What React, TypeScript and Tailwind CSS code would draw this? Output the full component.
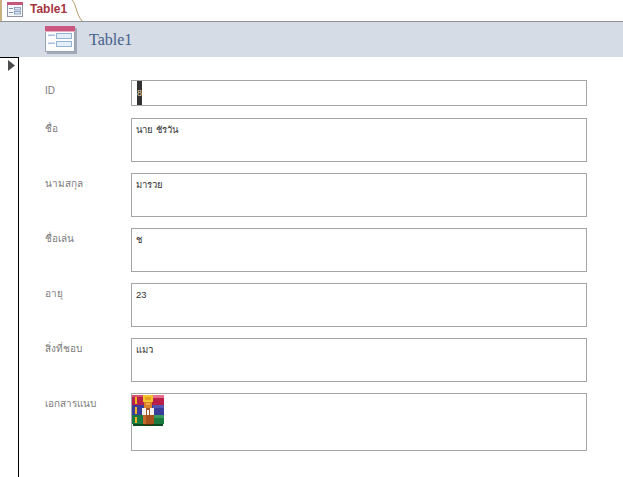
import React from "react";

const font = { fontFamily: '"Liberation Sans", Tahoma, "Noto Sans", sans-serif' };

function TableIcon({ big }: { big?: boolean }) {
  if (big) {
    return (
      <svg width="32" height="28" viewBox="0 0 32 28" className="block">
        <rect x="2" y="2" width="30" height="26" fill="#8a94a3" opacity="0.7" />
        <rect x="0.5" y="0.5" width="29" height="25" fill="#fdfdfe" stroke="#9aa3b1" />
        <rect x="0" y="0" width="30" height="5" fill="#c9577f" />
        <rect x="0" y="5" width="30" height="1" fill="#e9a9bf" />
        <rect x="3" y="8.5" width="7" height="1.5" fill="#a9c0de" />
        <rect x="3" y="16.5" width="7" height="1.5" fill="#a9c0de" />
        <rect x="11.5" y="7.5" width="15" height="5" fill="#e6eef8" stroke="#94b1d6" />
        <rect x="11.5" y="15.5" width="15" height="5" fill="#e6eef8" stroke="#94b1d6" />
      </svg>
    );
  }
  return (
    <svg width="16" height="15" viewBox="0 0 16 15" className="block">
      <rect x="0.5" y="0.5" width="15" height="14" fill="#f6f7fa" stroke="#8f97a6" />
      <rect x="0" y="0" width="16" height="3" fill="#c4587c" />
      <rect x="2" y="6" width="4" height="1" fill="#7f93ad" />
      <rect x="2" y="10" width="4" height="1" fill="#7f93ad" />
      <rect x="7.5" y="5.5" width="6" height="2.5" fill="#dbe5f1" stroke="#7d94b3" strokeWidth="0.8" />
      <rect x="7.5" y="9.5" width="6" height="2.5" fill="#dbe5f1" stroke="#7d94b3" strokeWidth="0.8" />
    </svg>
  );
}

function RarIcon() {
  return (
    <svg width="33" height="33" viewBox="0 0 33 33" className="block" shapeRendering="crispEdges">
      <rect x="0" y="1" width="32" height="10" fill="#b8204a" />
      <rect x="21" y="1" width="11" height="3" fill="#e8708c" />
      <rect x="0" y="1" width="11" height="2" fill="#d9506f" />
      <rect x="0" y="11" width="32" height="10" fill="#3b3d9a" />
      <rect x="21" y="11" width="11" height="3" fill="#5557b5" />
      <rect x="0" y="21" width="32" height="9" fill="#1a7a40" />
      <rect x="21" y="21" width="11" height="3" fill="#37995c" />
      <rect x="1" y="30" width="30" height="2" fill="#0b4a1c" />
      <rect x="3" y="3" width="2" height="7" fill="#f2b51e" />
      <rect x="3" y="13" width="2" height="7" fill="#f2b51e" />
      <rect x="3" y="23" width="2" height="6" fill="#f2b51e" />
      <rect x="11" y="1" width="10" height="7" fill="#f2c62e" />
      <rect x="13" y="3" width="6" height="3" fill="#e8a020" />
      <rect x="12" y="8" width="8" height="6" fill="#d9812b" />
      <rect x="14" y="9" width="4" height="2" fill="#f0a848" />
      <rect x="10" y="14" width="12" height="7" fill="#f4f1ea" />
      <rect x="14" y="14" width="4" height="7" fill="#a4552a" />
      <rect x="15" y="16" width="2" height="5" fill="#ffffff" />
      <rect x="11" y="21" width="11" height="9" fill="#a8501e" />
      <rect x="11" y="21" width="3" height="9" fill="#c46a2c" />
      <rect x="12" y="30" width="9" height="1" fill="#5a2a0e" />
    </svg>
  );
}

const fields = [
  { label: "ชื่อ", value: "นาย ชัรวัน" },
  { label: "นามสกุล", value: "มารวย" },
  { label: "ชื่อเล่น", value: "ช" },
  { label: "อายุ", value: "23" },
  { label: "สิ่งที่ชอบ", value: "แมว" },
];

function Row({ label, children, boxClass }: { label: string; children: React.ReactNode; boxClass: string }) {
  return (
    <div className="flex">
      <div className="w-[86px] shrink-0 pt-[3px] text-[10px] leading-[16px] text-[#7b7b7b]">{label}</div>
      <div className={`w-[456px] border border-[#a5a5a5] bg-white ${boxClass}`}>{children}</div>
    </div>
  );
}

export default function App() {
  return (
    <div className="h-[477px] w-[623px] overflow-hidden bg-white" style={font}>
      <div className="relative flex h-[22px] items-end border-b border-[#8f9296]">
        <div className="flex h-[21px] w-[72px] items-center gap-[7px] border-l-2 border-[#c9b27f] bg-white pb-[3px] pl-[5px]">
          <TableIcon />
          <span className="text-[12px] font-bold leading-none text-[#a5353f]">Table1</span>
        </div>
        <svg width="12" height="22" viewBox="0 0 12 22" className="absolute left-[71px] top-0 block">
          <path d="M0 0 H1 C5 3 5 14 11 21 H0 Z" fill="#ffffff" />
          <path d="M1 0 C5 3 5 14 11 21" fill="none" stroke="#b59a66" />
        </svg>
      </div>
      <div className="flex h-[35px] items-center bg-[#d6dce5] pl-[45px]">
        <TableIcon big />
        <span
          className="ml-[12px] text-[16px] leading-none text-[#44618a]"
          style={{ fontFamily: '"Liberation Serif", serif' }}
        >
          Table1
        </span>
      </div>
      <div className="flex h-[420px]">
        <div className="h-full w-[19px] shrink-0 border-r border-t border-black pl-[8px] pt-[2px]">
          <svg width="7" height="11" viewBox="0 0 7 11" className="block">
            <path d="M0 0 L7 5.5 L0 11 Z" fill="#4d4d4d" />
          </svg>
        </div>
        <div className="flex flex-col gap-[11px] pl-[26px] pt-[23px]">
          <div className="mb-[1px]">
            <Row label="ID" boxClass="h-[26px] pl-[5px]">
              <div className="h-[24px] w-[5px] overflow-hidden bg-[#333333] text-[9px] leading-[24px] text-[#f0d8a8]">8</div>
            </Row>
          </div>
          {fields.map((f) => (
            <Row key={f.label} label={f.label} boxClass="h-[44px] pl-[4px] pt-[4px]">
              <div className="text-[9.5px] leading-[14px] text-[#333333]">{f.value}</div>
            </Row>
          ))}
          <Row label="เอกสารแนบ" boxClass="h-[58px]">
            <RarIcon />
          </Row>
        </div>
      </div>
    </div>
  );
}
